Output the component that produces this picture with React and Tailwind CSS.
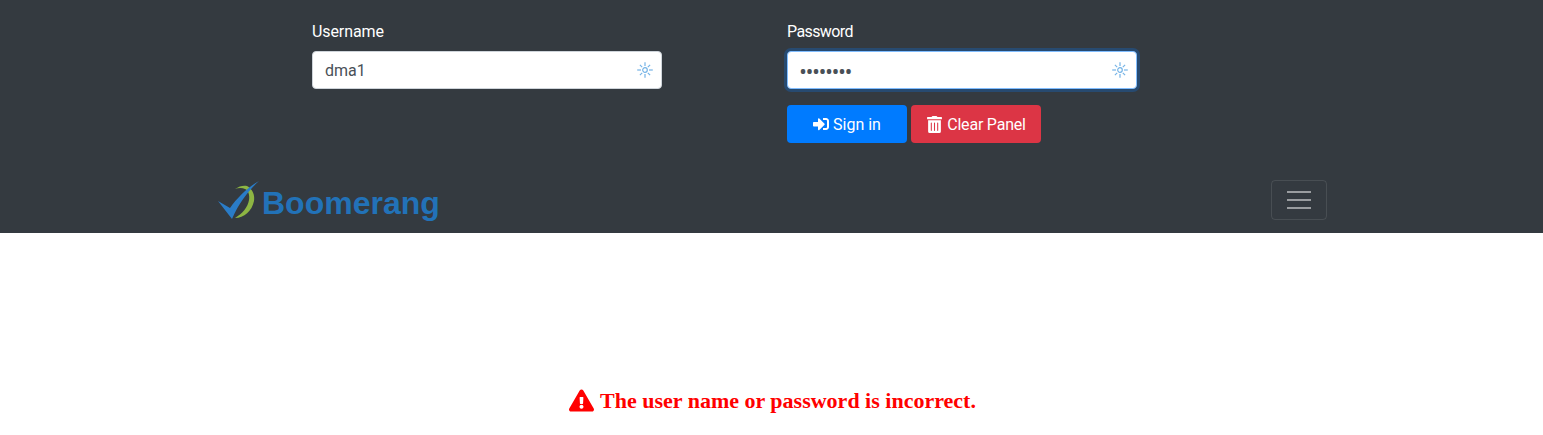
import React from "react";
import { FaSignInAlt, FaTrashAlt, FaExclamationTriangle } from "react-icons/fa";

const font = "font-['Roboto','Noto_Sans',sans-serif]";

function Sun() {
  const rays = [0, 45, 90, 135, 180, 225, 270, 315];
  return (
    <svg width="16" height="16" viewBox="0 0 16 16" fill="none" stroke="#74b3e6" strokeWidth="1.2" className="shrink-0">
      <circle cx="8" cy="8" r="2.3" />
      {rays.map((a) => (
        <line key={a} x1="8" y1="4" x2="8" y2={a % 90 === 0 ? "0.2" : "0.8"} transform={`rotate(${a} 8 8)`} />
      ))}
    </svg>
  );
}

function Field({ label, labelClass, value, focus, children }) {
  return (
    <div className="w-[350px] flex flex-col">
      <label className={`text-white text-[16px] leading-6 h-6 mb-2 pt-px ${labelClass}`}>{label}</label>
      <div
        className={`h-[38px] bg-white rounded border flex items-center justify-between pl-3 pr-2 ${
          focus ? "border-[#80bdff] shadow-[0_0_0_3px_rgba(0,123,255,0.25)]" : "border-[#ced4da]"
        }`}
      >
        <span className={`text-[#495057] ${focus ? "font-['Noto_Sans',sans-serif] text-[16px] tracking-[0.5px] font-bold pt-px" : "text-[16px] pt-[2px]"}`}>{value}</span>
        <Sun />
      </div>
      {children}
    </div>
  );
}

function Logo() {
  return (
    <div className="flex items-center h-10 gap-[2px]">
      <svg width="43" height="38" viewBox="0 0 43 38" className="shrink-0">
        <path d="M18 8 C22 5 27 4 30 5 C36 8 38 15 37 20 C35 30 27 37 18 37 C25 33 31 26 32 19 C33 14 31 9 28 8 C25 6.5 21 7 18 8 Z" fill="#8db543" />
        <path d="M1 20 L13 27 C20 17 31 6 42 0 C32 9 22 22 15 38 Z" fill="#2a7cc7" />
      </svg>
      <span className="font-['Liberation_Sans',sans-serif] font-bold text-[32px] leading-none text-[#2272b8] mt-[6px]">
        Boomerang
      </span>
    </div>
  );
}

export default function App() {
  return (
    <div className={`w-full min-h-[435px] bg-white ${font}`}>
      <div className="bg-[#343a40] h-[233px] flex flex-col">
        <div className="flex gap-[125px] pl-[312px] pt-[19px]">
          <Field label="Username" labelClass="tracking-[-0.1px]" value="dma1" />
          <Field label="Password" labelClass="tracking-[-0.6px]" value="••••••••" focus>
            <div className="flex gap-1 mt-4">
              <button className="w-[120px] h-[38px] bg-[#007bff] rounded text-white text-[16px] flex items-center justify-center gap-1">
                <FaSignInAlt className="text-[16px]" /> <span className="pt-[2px]">Sign in</span>
              </button>
              <button className="w-[130px] h-[38px] bg-[#dc3545] rounded text-white text-[16px] flex items-center justify-center gap-1 whitespace-nowrap">
                <FaTrashAlt className="text-[17px]" /> <span className="pt-[2px] tracking-[-0.2px]">Clear Panel</span>
              </button>
            </div>
          </Field>
        </div>
        <div className="flex items-center justify-between pl-[217px] pr-[216px] mt-[37px]">
          <Logo />
          <button className="w-[56px] h-10 rounded border border-[rgba(255,255,255,0.1)] flex flex-col items-center justify-center gap-[6px]">
            <span className="block w-6 h-[2px] bg-[rgba(255,255,255,0.5)]" />
            <span className="block w-6 h-[2px] bg-[rgba(255,255,255,0.5)]" />
            <span className="block w-6 h-[2px] bg-[rgba(255,255,255,0.5)]" />
          </button>
        </div>
      </div>
      <div className="flex justify-center items-center gap-[6px] pl-[2px] pt-[153px] text-[#ff0000] font-['Liberation_Serif',serif] font-bold text-[22px] leading-[29px]">
        <FaExclamationTriangle className="text-[25px]" />
        <span>The user name or password is incorrect.</span>
      </div>
    </div>
  );
}
